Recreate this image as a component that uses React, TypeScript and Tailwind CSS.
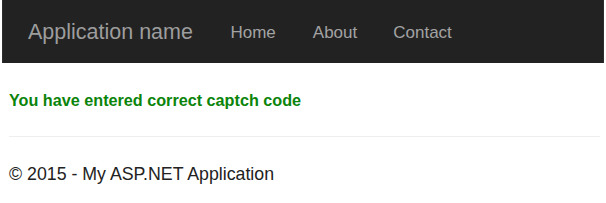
import React from "react";

export default function App() {
  return (
    <div className="w-[606px] h-[203px] bg-white overflow-hidden" style={{ fontFamily: '"Liberation Sans", Arial, sans-serif' }}>
      <div className="h-[63px] pt-[2px] bg-[#222222] border-x border-[#2e2e2e] mx-[2px] flex items-center">
        <span className="ml-[25px] text-[21.5px] leading-none text-[#9d9d9d]">Application name</span>
        <span className="ml-[37.5px] text-[17px] leading-none text-[#a3a3a3]">Home</span>
        <span className="ml-[37px] text-[17px] leading-none text-[#a3a3a3]">About</span>
        <span className="ml-[36px] text-[17px] leading-none text-[#a3a3a3]">Contact</span>
      </div>
      <div className="px-[9px]">
        <div className="pt-[27px] text-[16.2px] leading-[20px] font-bold text-[#0b840b]">You have entered correct captch code</div>
        <div className="mt-[26px] h-px bg-[#eeeeee] mr-[-3px]" />
        <div className="pt-[27px] text-[17.75px] leading-[20px] text-[#222222]">© 2015 - My ASP.NET Application</div>
      </div>
    </div>
  );
}
